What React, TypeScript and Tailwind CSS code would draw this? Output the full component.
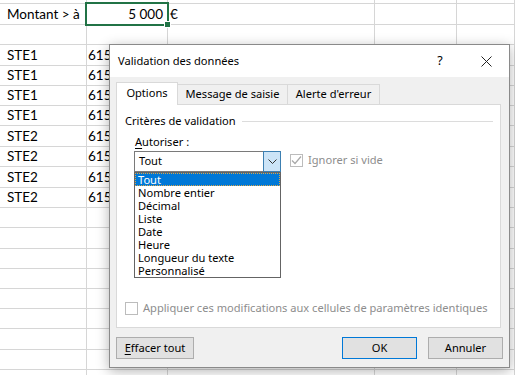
import React from "react";

const COLS = ["w-[87px]", "w-[81px]", "w-[207px]", "w-[82px]", "flex-1"];
const ROW_H = [
  "h-[4px]", "h-[21px]", "h-[20px]", "h-[21px]", "h-[20px]", "h-[20px]", "h-[20px]",
  "h-[21px]", "h-[20px]", "h-[21px]", "h-[20px]", "h-[20px]", "h-[21px]", "h-[20px]",
  "h-[20px]", "h-[20px]", "h-[20px]", "h-[21px]", "h-[20px]", "h-[20px]",
];

function rowData(i: number): string[] {
  if (i === 1) return ["Montant > à", "5 000", "€"];
  if (i >= 3 && i <= 6) return ["STE1", "615200"];
  if (i >= 7 && i <= 10) return ["STE2", "615200"];
  return [];
}

function Sheet() {
  return (
    <div className="flex flex-col font-['Lato'] text-[13.5px] text-black">
      {ROW_H.map((h, i) => {
        const d = rowData(i);
        return (
          <div key={i} className={`flex ${h}`}>
            {COLS.map((w, c) => (
              <div
                key={c}
                className={`${w} shrink-0 border-r border-b border-[#d6d6d6] flex items-center overflow-visible whitespace-nowrap ${
                  c === 1 && i === 1 ? "justify-end pr-[4px]" : c === 0 ? "pl-[7px]" : c === 1 ? "pl-[1px]" : "pl-[2px]"
                }`}
              >
                {d[c] ?? ""}
              </div>
            ))}
          </div>
        );
      })}
    </div>
  );
}

function Chevron() {
  return (
    <svg width="9" height="5" viewBox="0 0 9 5">
      <path d="M0.5 0.5 L4.5 4.5 L8.5 0.5" fill="none" stroke="#333" strokeWidth="1" />
    </svg>
  );
}

function Check({ checked }: { checked?: boolean }) {
  return (
    <div className="w-[13px] h-[13px] shrink-0 border border-[#bcbcbc] bg-white flex items-center justify-center">
      {checked && (
        <svg width="11" height="11" viewBox="0 0 11 11">
          <path d="M1 5.5 L4 8.5 L10 1.5" fill="none" stroke="#a8a8a8" strokeWidth="1.2" />
        </svg>
      )}
    </div>
  );
}

const ITEMS = ["Tout", "Nombre entier", "Décimal", "Liste", "Date", "Heure", "Longueur du texte", "Personnalisé"];

function Dialog() {
  return (
    <div className="absolute left-[109px] top-[44px] w-[401px] h-[324px] border border-[#8a8a8a] bg-[#f0f0f0] shadow-[0_3px_12px_rgba(0,0,0,0.3)] flex flex-col font-['Noto_Sans'] text-[11.1px] text-black">
      <div className="h-[32px] bg-white flex items-center shrink-0">
        <div className="pl-[8px]">Validation des données</div>
        <div className="ml-auto flex h-full">
          <div className="w-[46px] h-full flex items-center justify-center text-[12.5px]">?</div>
          <div className="w-[46px] h-full flex items-center justify-center">
            <svg width="11" height="11" viewBox="0 0 11 11">
              <path d="M0.5 0.5 L10.5 10.5 M10.5 0.5 L0.5 10.5" stroke="#222" strokeWidth="1" />
            </svg>
          </div>
        </div>
      </div>
      <div className="flex-1 flex flex-col pl-[6px] pr-[8px] pt-[5px]">
        <div className="flex items-end relative z-10 h-[23px] -mb-px">
          <div className="h-[23px] w-[62px] bg-white border border-b-0 border-[#d9d9d9] flex items-center justify-center pb-[1px]">
            Options
          </div>
          <div className="h-[20px] mb-px w-[110px] border-t border-r border-[#d9d9d9] flex items-center justify-center">
            Message de saisie
          </div>
          <div className="h-[20px] mb-px w-[92px] border-t border-r border-[#d9d9d9] flex items-center justify-center">
            Alerte d'erreur
          </div>
        </div>
        <div className="h-[224px] bg-white border border-[#d9d9d9] flex flex-col">
          <div className="mt-[8px] ml-[8px] mr-[7px] flex items-center h-[16px]">
            <span>Critères de validation</span>
            <div className="flex-1 h-px bg-[#dcdcdc] ml-[6px]" />
          </div>
          <div className="mt-[5px] ml-[18px] h-[16px] leading-[16px]">
            <span className="underline underline-offset-2">A</span>utoriser :
          </div>
          <div className="mt-[1px] ml-[17px] flex items-start">
            <div className="relative w-[147px] h-[21px] border border-[#7a7a7a] bg-white flex items-center">
              <span className="pl-[4px]">Tout</span>
              <div className="absolute -top-px -right-px -bottom-px w-[18px] border border-[#3c7fb1] bg-[#cce4f7] flex items-center justify-center">
                <Chevron />
              </div>
              <div className="absolute left-[-1px] top-[20px] w-[147px] border border-[#646464] bg-white z-20 flex flex-col">
                {ITEMS.map((it, i) => (
                  <div
                    key={it}
                    className={`h-[13px] leading-[13px] pl-[3px] whitespace-nowrap ${
                      i === 0 ? "bg-[#0078d7] text-white outline-1 outline-dotted outline-offset-[-1px] outline-[#d9a54a]" : ""
                    }`}
                  >
                    {it}
                  </div>
                ))}
              </div>
            </div>
            <div className="ml-[9px] mt-[1px] flex items-center gap-[5px] text-[#8d8d8d]">
              <Check checked />
              <span>Ignorer si vide</span>
            </div>
          </div>
          <div className="mt-auto mb-[10px] ml-[8px] flex items-center gap-[5px] text-[#8d8d8d]">
            <Check />
            <span>Appliquer ces modifications aux cellules de paramètres identiques</span>
          </div>
        </div>
        <div className="mt-[9px] flex -mr-[2px]">
          <div className="w-[78px] h-[22px] bg-[#e1e1e1] border border-[#adadad] flex items-center justify-center">
            <span><span className="underline underline-offset-2">E</span>ffacer tout</span>
          </div>
          <div className="ml-auto w-[75px] h-[22px] bg-[#e1e1e1] border border-[#0078d7] flex items-center justify-center">
            OK
          </div>
          <div className="ml-[11px] w-[75px] h-[22px] bg-[#e1e1e1] border border-[#adadad] flex items-center justify-center">
            Annuler
          </div>
        </div>
      </div>
    </div>
  );
}

export default function App() {
  return (
    <div className="relative w-[515px] h-[375px] overflow-hidden bg-white">
      <Sheet />
      <div className="absolute left-[85px] top-[2px] w-[84px] h-[24px] border-2 border-[#217346]" />
      <div className="absolute left-[164px] top-[21px] w-[7px] h-[7px] bg-[#217346] border border-white" />
      <Dialog />
    </div>
  );
}
